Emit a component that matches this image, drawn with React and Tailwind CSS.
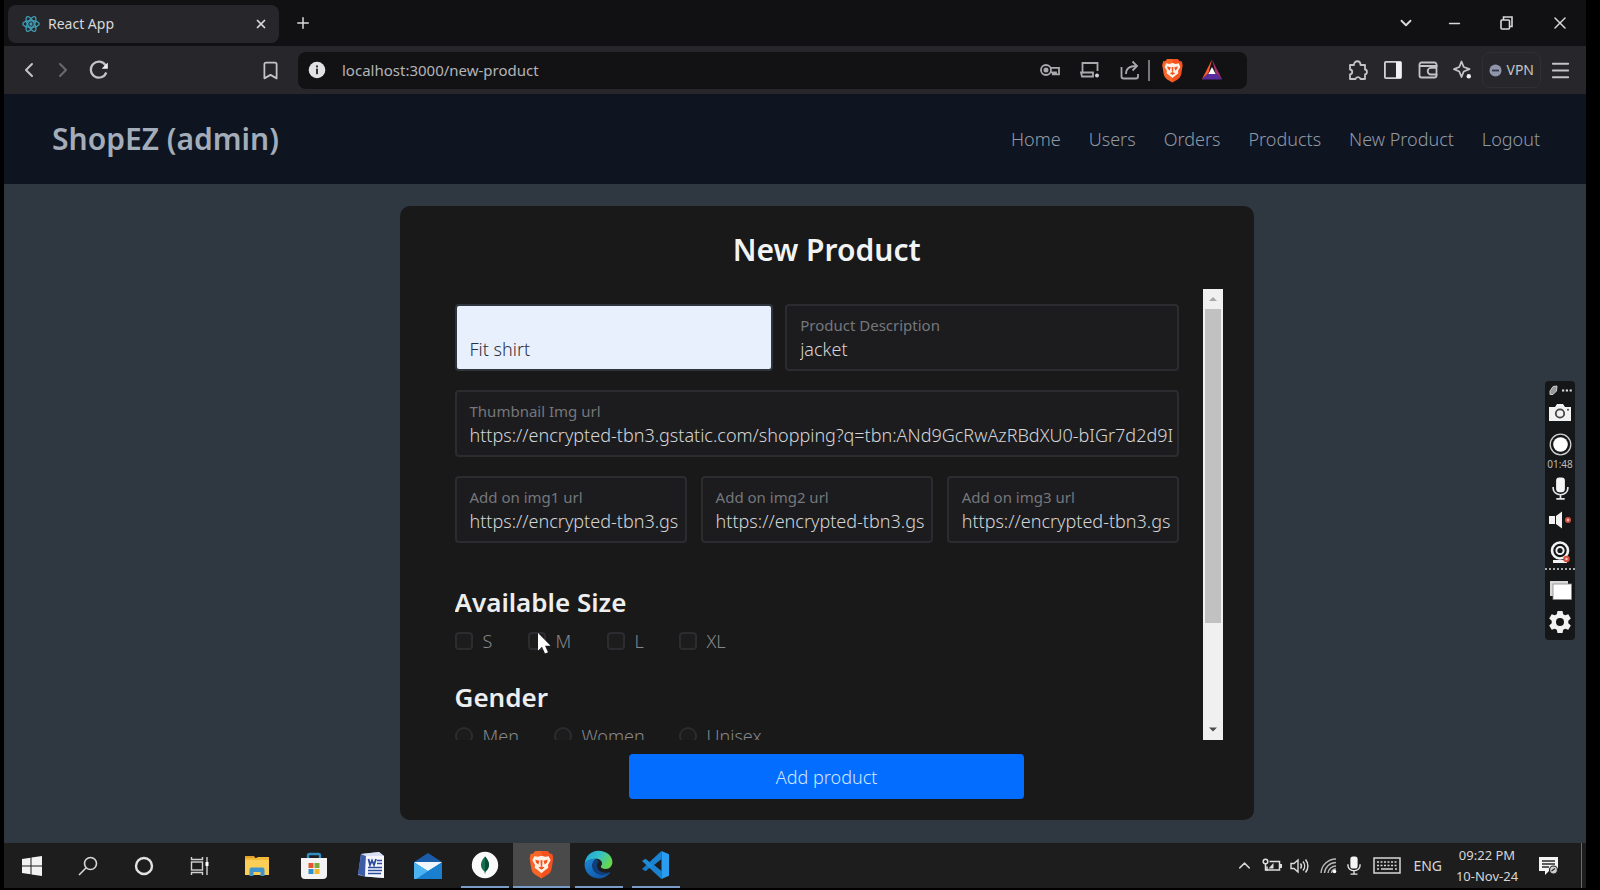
import { useState } from "react";
import {
  Bookmark,
  ChevronDown,
  ChevronLeft,
  ChevronRight,
  ChevronUp,
  Menu,
  Minus,
  Plus,
  X,
} from "lucide-react";

const URL_VALUE = "https://encrypted-tbn3.gs";
const THUMB_VALUE =
  "https://encrypted-tbn3.gstatic.com/shopping?q=tbn:ANd9GcRwAzRBdXU0-bIGr7d2d9I";

/* ---------- icons ---------- */

function ReactLogo() {
  return (
    <svg width="18" height="18" viewBox="-12 -12 24 24" fill="none" stroke="#3f9db5" strokeWidth="1.8">
      <circle r="2.2" fill="#3f9db5" stroke="none" />
      <ellipse rx="11" ry="4.3" />
      <ellipse rx="11" ry="4.3" transform="rotate(60)" />
      <ellipse rx="11" ry="4.3" transform="rotate(120)" />
    </svg>
  );
}

function ReloadIcon() {
  return (
    <svg width="22" height="22" viewBox="0 0 22 22" fill="none" stroke="#c4c4c8" strokeWidth="2.2">
      <path d="M18.3 13.5A8 8 0 1 1 17.6 6.4" />
      <path d="M19.8 3.6v6.2h-6.2z" fill="#f0f0f2" stroke="none" />
    </svg>
  );
}

function InfoIcon() {
  return (
    <svg width="18" height="18" viewBox="0 0 18 18">
      <circle cx="9" cy="9" r="8.3" fill="#e2e2e4" />
      <rect x="8" y="7.6" width="2" height="5.6" fill="#333" />
      <rect x="8" y="4.4" width="2" height="2" fill="#333" />
    </svg>
  );
}

function KeyIcon() {
  return (
    <svg width="20" height="14" viewBox="0 0 20 14" fill="none" stroke="#a9a9ad" strokeWidth="1.8">
      <circle cx="6" cy="7" r="5" />
      <circle cx="6" cy="7" r="1.6" fill="#a9a9ad" />
      <path d="M10.6 4.8H19v6.600h-3v-2h-1.600v2h-1.600v-2h-2" />
    </svg>
  );
}

function InstallIcon() {
  return (
    <svg width="20" height="18" viewBox="0 0 20 18" fill="none" stroke="#a9a9ad" strokeWidth="1.8">
      <path d="M17.500 10V2H2.500v10.500" />
      <path d="M1 11.500h12v4H2z" />
      <circle cx="17" cy="14.600" r="2" fill="#d0d0d4" stroke="none" />
    </svg>
  );
}

function ShareIcon() {
  return (
    <svg width="20" height="20" viewBox="0 0 20 20" fill="none" stroke="#a9a9ad" strokeWidth="1.8">
      <path d="M1.500 7v9.500a2 2 0 0 0 2 2H16a2 2 0 0 0 2-2V14" />
      <path d="M6 14c0-5 3-8 10.500-8" />
      <path d="m12.500 1.500 4.500 4.500-4.500 4.500" />
    </svg>
  );
}

function BraveLogo({ size }) {
  return (
    <svg width={size} height={size} viewBox="0 0 24 28">
      <path d="M6 1h12l2.200 2.500 2.200.2 1 4.300-1.600 10c-.6 3-2 4.500-4 6L12 27.500 6.200 24c-2-1.500-3.400-3-4-6L.6 8l1-4.300 2.200-.2z" fill="#f4511e" />
      <path d="M6 1h6v26.500L6.200 24c-2-1.500-3.400-3-4-6L.6 8l1-4.300 2.200-.2z" fill="#fb7a33" fillOpacity=".5" />
      <path d="m5 6 3.500.6L12 5.600l3.500 1L19 6l1.800 4-2.600 4.400.4 2.800-3.600 2.600L12 22.400l-3-2.600-3.600-2.600.4-2.800L3.200 10z" fill="#fff0e6" />
      <path d="m6 9.500 4 .8-1 3.700-2.200-1.800zM18 9.500l-4 .8 1 3.700 2.200-1.800zM11 10h2l-.3 5.500h-1.400zM9 17l3-1.200L15 17l-3 2z" fill="#f4511e" />
    </svg>
  );
}

function BatLogo() {
  return (
    <svg width="22" height="22" viewBox="0 0 22 22">
      <path d="M11 .5 7.500 14 .8 20.500z" fill="#ff5a2b" />
      <path d="M11 .5 21.200 20.500 14.500 14z" fill="#a3306f" />
      <path d="M.8 20.500h20.400L14.500 14h-7z" fill="#5a2d9c" />
      <path d="m11 8 3.600 7H7.400z" fill="#fff" />
    </svg>
  );
}

function PuzzleIcon() {
  return (
    <svg width="21" height="21" viewBox="0 0 21 21" fill="none" stroke="#c4c4c8" strokeWidth="1.8" strokeLinejoin="round">
      <path d="M3 5h4c0-5 6.500-5 6.500 0H18v4.500c2.600.4 2.600 4.600 0 5V19h-4.500c-.6-2.600-4.400-2.600-5 0H3v-4.500c3-.6 3-4.600 0-5z" />
    </svg>
  );
}

function SidebarIcon() {
  return (
    <svg width="20" height="20" viewBox="0 0 20 20">
      <rect x="1.900" y="1.900" width="16.200" height="16.200" rx="1" fill="none" stroke="#d2d2d6" strokeWidth="1.800" />
      <rect x="13" y="2" width="5" height="16" fill="#f2f2f4" />
    </svg>
  );
}

function WalletIcon() {
  return (
    <svg width="20" height="18" viewBox="0 0 20 18" fill="none" stroke="#c4c4c8" strokeWidth="1.800">
      <path d="M18.500 6V3.500a2 2 0 0 0-2-2h-13a2 2 0 0 0-2 2v11a2 2 0 0 0 2 2h13a2 2 0 0 0 2-2V13" />
      <path d="M2 5h16.500v8.500H13a3.300 3.300 0 0 1 0-6.600h5" />
    </svg>
  );
}

function SparkleIcon() {
  return (
    <svg width="19" height="20" viewBox="0 0 19 20" fill="none" stroke="#c4c4c8" strokeWidth="1.800" strokeLinejoin="round">
      <path d="M8.500 1.500 10.700 7l5.800 2.200-5.800 2.300-2.200 5.500-2.200-5.500L1 9.200 6.300 7z" />
      <circle cx="15.800" cy="16.300" r="2.200" fill="#f0f0f2" stroke="none" />
    </svg>
  );
}

function RestoreIcon() {
  return (
    <svg width="13" height="14" viewBox="0 0 13 14" fill="none" stroke="#d8d8da" strokeWidth="1.600">
      <rect x="1" y="4" width="8.500" height="9" rx="1" />
      <path d="M3.500 4V1H12v9.500H9.500" />
    </svg>
  );
}

function WindowsLogo() {
  return (
    <svg width="20" height="20" viewBox="0 0 20 20" fill="#f2f2f2">
      <path d="M0 3 8.500 1.800v7.700H0zM9.500 1.600 20 0v9.500H9.500zM0 10.500h8.500v7.700L0 17zM9.500 10.500H20V20L9.500 18.400z" />
    </svg>
  );
}

function SearchGlyph() {
  return (
    <svg width="20" height="20" viewBox="0 0 20 20" fill="none" stroke="#d6d6d6" strokeWidth="1.600">
      <circle cx="12.500" cy="7.500" r="6" />
      <path d="M8.200 11.800 1 19" />
    </svg>
  );
}

function CortanaGlyph() {
  return (
    <svg width="20" height="20" viewBox="0 0 20 20" fill="none" stroke="#e2e2e2" strokeWidth="2.400">
      <circle cx="10" cy="10" r="8" />
    </svg>
  );
}

function TaskViewGlyph() {
  return (
    <svg width="20" height="18" viewBox="0 0 20 18" fill="none" stroke="#d2d2d2" strokeWidth="1.400">
      <rect x="1.500" y="5" width="11" height="8" />
      <path d="M1.500 0v2.500h11V0M1.500 18v-2.500h11V18M17 0v18" />
      <rect x="15.500" y="5" width="3" height="4" fill="#fff" stroke="none" />
    </svg>
  );
}

function ExplorerLogo() {
  return (
    <svg width="26" height="22" viewBox="0 0 26 22">
      <path d="M1 1h9l2 3H1z" fill="#e0a126" />
      <path d="M1 3h24v17H1z" fill="#fbcf57" />
      <path d="M1 3h11l2-1h11v3H1z" fill="#f2b93a" />
      <path d="M5.500 21v-6.500a2 2 0 0 1 2-2h11a2 2 0 0 1 2 2V21h-4v-4h-7v4z" fill="#3f94cc" />
    </svg>
  );
}

function StoreLogo() {
  return (
    <svg width="28" height="28" viewBox="0 0 28 28">
      <path d="M8 7V3.500a1.500 1.500 0 0 1 1.500-1.500h9A1.500 1.500 0 0 1 20 3.500V7" fill="none" stroke="#2f8ec4" strokeWidth="2.400" />
      <path d="M1 6h26v17a4 4 0 0 1-4 4H5a4 4 0 0 1-4-4z" fill="#f3f3f3" />
      <rect x="8.500" y="11" width="5" height="5" fill="#e2562f" />
      <rect x="14.500" y="11" width="5" height="5" fill="#7fa83a" />
      <rect x="8.500" y="17" width="5" height="5" fill="#2d8fd0" />
      <rect x="14.500" y="17" width="5" height="5" fill="#f0b62c" />
    </svg>
  );
}

function WriterLogo() {
  return (
    <svg width="28" height="27" viewBox="0 0 28 27">
      <path d="M4 2 22 0l5 4v22l-19-1.500L1 23z" fill="#9fb3dc" />
      <path d="M4 2 9 4 8 24.500 1 22z" fill="#3c5ca8" />
      <path d="M9 4h18v22L8 24.500z" fill="#f5f7fc" />
      <path d="M4 2 22 0l5 4H9z" fill="#d9e0f1" />
      <path d="m11.500 7 1.500 6 2-4.500 2 4.500 2-6" fill="none" stroke="#2c4b9b" strokeWidth="1.800" />
      <path d="M20 8.500h5M20 11.500h5M11 15.500h14M11 18.500h14M11 21.500h13" stroke="#2c4b9b" strokeWidth="1.500" />
    </svg>
  );
}

function MailLogo() {
  return (
    <svg width="30" height="28" viewBox="0 0 30 28">
      <path d="M1 10 15 1l14 9v4H1z" fill="#1a5ca8" />
      <path d="M1 10h28L15 20z" fill="#eef5fb" />
      <path d="M1 10.500 15 19l14-8.500V27H1z" fill="#2f9fe6" />
      <path d="M29 10.500V27H3l12-8z" fill="#1b7fd0" />
      <path d="M1 10.500 15 19 3 27H1z" fill="#4bb4f0" />
    </svg>
  );
}

function MongoLogo() {
  return (
    <svg width="28" height="28" viewBox="0 0 28 28">
      <circle cx="14" cy="14" r="13.200" fill="#fafafa" />
      <path d="M14 5.500c5 5.500 5.500 11 .4 15.200V22.500h-.8v-1.800C8.500 16.500 9 11 14 5.500z" fill="#15704f" />
      <path d="M14 5.500c5 5.500 5.500 11 .4 15.200L14 21z" fill="#0b4a38" />
    </svg>
  );
}

function EdgeLogo() {
  return (
    <svg width="29" height="29" viewBox="0 0 29 29">
      <defs>
        <linearGradient id="edgeTop" x1="0" y1="0" x2="1" y2=".4">
          <stop offset="0" stopColor="#1f9fe0" />
          <stop offset=".55" stopColor="#35c1c6" />
          <stop offset="1" stopColor="#66d651" />
        </linearGradient>
        <linearGradient id="edgeLow" x1="0" y1="0" x2=".6" y2="1">
          <stop offset="0" stopColor="#1b8bdc" />
          <stop offset="1" stopColor="#1257a8" />
        </linearGradient>
      </defs>
      <path d="M.6 14.500C1 6.500 7 .8 14.500.8 22.500.8 28.400 6 28.400 12c0 4.200-3 7-6.600 7-3 0-5-1-5-2.200 0-.8 1.200-1.300 1.200-3.300 0-2.600-2.500-4.700-6-4.700C6.500 8.800 2 11 .6 14.500z" fill="url(#edgeTop)" />
      <path d="M.6 14.500C2 11 6.500 8.800 12 8.800c-3 2-4 5-3.500 8.200.6 5 5.500 8 10.500 7.500 3.300-.3 5.500-1.500 7.400-2.600C24 26 19.500 28.400 14.500 28.400 6.500 28.400.4 22 .6 14.500z" fill="url(#edgeLow)" />
      <path d="M12 8.800c-3 2-4 5-3.500 8.200.6 5 5.500 8 10.500 7.500 3.300-.3 5.500-1.500 7.400-2.600-5.400 2-12.400.4-13.400-5.400-.3-2.200.5-3.600 1.800-4.700z" fill="#0f3f7e" />
    </svg>
  );
}

function CodeLogo() {
  return (
    <svg width="29" height="28" viewBox="0 0 29 28">
      <path d="M20.500 0 28 3.300v21.400L20.500 28z" fill="#2a9df0" />
      <path d="M20.500 0v7.500L4.500 20.300 1 18z" fill="#1478c4" />
      <path d="M20.500 28v-7.500L4.500 7.700 1 10z" fill="#1f8ad8" />
      <path d="M20.500 0 9 11l4 3 7.500-6zM20.500 28 9 17l4-3 7.500 6z" fill="#1b82cf" />
    </svg>
  );
}

function BatteryGlyph() {
  return (
    <svg width="20" height="15" viewBox="0 0 20 15" fill="none" stroke="#dedede" strokeWidth="1.500">
      <path d="M7.500 3.500h10v8.500H5V8.500" />
      <path d="M19 6v4" strokeWidth="2" />
      <path d="M11.500 5v5.500H6.500z" fill="#dedede" stroke="none" />
      <circle cx="3.500" cy="3.500" r="2.300" />
      <path d="M3.500 6v6H6" />
    </svg>
  );
}

function SpeakerGlyph() {
  return (
    <svg width="20" height="16" viewBox="0 0 20 16" fill="none" stroke="#dedede" strokeWidth="1.400">
      <path d="M1 5.500h3L8 2v12l-4-3.500H1z" />
      <path d="M10.500 5.500a4 4 0 0 1 0 5M13 3.500a7 7 0 0 1 0 9M15.500 1.500a10 10 0 0 1 0 13" />
    </svg>
  );
}

function WifiGlyph() {
  return (
    <svg width="17" height="17" viewBox="0 0 17 17" fill="none" stroke="#b8b8b8" strokeWidth="1.400">
      <path d="M1 16A15 15 0 0 1 16 2M4.500 16A11.500 11.500 0 0 1 16 5.500M8 16a8 8 0 0 1 8-7M11.500 16a4.500 4.500 0 0 1 4.500-4" />
      <circle cx="14.500" cy="14.500" r="1.800" fill="#fff" stroke="none" />
    </svg>
  );
}

function MicGlyph({ width, height }) {
  return (
    <svg width={width} height={height} viewBox="0 0 16 22" fill="none" stroke="#e4e4e4" strokeWidth="1.600">
      <rect x="3.800" y=".5" width="8.400" height="14" rx="3" fill="#f4f4f4" stroke="none" />
      <path d="M1 9.500v1.500a7 6 0 0 0 14 0V9.500M8 17v4M4 21h8" />
    </svg>
  );
}

function KeyboardGlyph() {
  return (
    <svg width="28" height="17" viewBox="0 0 28 17" fill="none" stroke="#d6d6d6" strokeWidth="1.500">
      <rect x="1" y="1" width="26" height="15" />
      <path d="M4 5h20M4 8.500h20" strokeDasharray="2 1.500" />
      <path d="M4 12h2M8 12h12M22 12h2" />
    </svg>
  );
}

function NotificationGlyph() {
  return (
    <svg width="21" height="20" viewBox="0 0 21 20">
      <path d="M1 1h19v14h-9l-4 4v-4H1z" fill="#f4f4f4" />
      <path d="M4 5h13M4 8h13M4 11h7" stroke="#2a2a2a" strokeWidth="1.300" />
      <circle cx="15.500" cy="14" r="4" fill="#cfcfcf" stroke="#222" strokeWidth="1.200" />
      <path d="m13.500 15 3.500-2.500" stroke="#222" strokeWidth="1.200" />
    </svg>
  );
}

/* ---------- browser frame ---------- */

function IconButton({ label, className = "", children }) {
  return (
    <button type="button" aria-label={label} className={`flex items-center justify-center ${className}`}>
      {children}
    </button>
  );
}

function TabStrip() {
  return (
    <div className="flex h-[46px] items-center bg-[#111113] pl-1 text-[#d8d8da]">
      <div className="mt-0.5 flex h-[38px] w-[271px] items-center rounded-lg bg-[#27272b] pr-2.5 pl-3.5">
        <ReactLogo />
        <span className="ml-2 flex-1 text-sm leading-5">React App</span>
        <IconButton label="Close tab" className="size-4">
          <X size={14} strokeWidth={3} />
        </IconButton>
      </div>
      <IconButton label="New tab" className="ml-3.5 size-5">
        <Plus size={18} strokeWidth={2} />
      </IconButton>
      <div className="ml-auto flex items-center pr-2.5">
        <IconButton label="Search tabs" className="w-12">
          <ChevronDown size={18} strokeWidth={2.5} />
        </IconButton>
        <IconButton label="Minimize" className="w-12">
          <Minus size={17} strokeWidth={2} />
        </IconButton>
        <IconButton label="Restore" className="w-14">
          <RestoreIcon />
        </IconButton>
        <IconButton label="Close" className="ml-2.5 w-8">
          <X size={20} strokeWidth={1.8} />
        </IconButton>
      </div>
    </div>
  );
}

function Toolbar() {
  return (
    <div className="flex h-12 items-center bg-[#27272b] pr-3.5 text-[#c4c4c8]">
      <IconButton label="Back" className="ml-[7px] w-9">
        <ChevronLeft size={24} strokeWidth={2} />
      </IconButton>
      <IconButton label="Forward" className="w-8 text-[#6a6a6e]">
        <ChevronRight size={24} strokeWidth={2} />
      </IconButton>
      <IconButton label="Reload" className="ml-1 w-8">
        <ReloadIcon />
      </IconButton>
      <IconButton label="Bookmark this page" className="ml-[139px] w-8">
        <Bookmark size={21} strokeWidth={2} />
      </IconButton>
      <div className="mr-[100px] ml-3 flex h-[37px] min-w-0 flex-1 items-center rounded-lg bg-[#121214] pr-6 pl-2.5">
        <InfoIcon />
        <input
          aria-label="Address"
          defaultValue="localhost:3000/new-product"
          className="ml-4 min-w-0 flex-1 bg-transparent text-[15px] leading-5 text-[#b4b4b8] outline-none"
        />
        <IconButton label="Passwords" className="mr-5"><KeyIcon /></IconButton>
        <IconButton label="Install app" className="mr-5"><InstallIcon /></IconButton>
        <IconButton label="Share" className="mr-2"><ShareIcon /></IconButton>
        <span className="mr-2.5 h-[21px] w-0.5 bg-[#77777b]" />
        <IconButton label="Brave Shields" className="mr-4"><BraveLogo size={25} /></IconButton>
        <IconButton label="Brave Rewards"><BatLogo /></IconButton>
      </div>
      <div className="flex items-center">
        <IconButton label="Extensions" className="mr-[15px]"><PuzzleIcon /></IconButton>
        <IconButton label="Sidebar" className="mr-[15px]"><SidebarIcon /></IconButton>
        <IconButton label="Wallet" className="mr-[15px]"><WalletIcon /></IconButton>
        <IconButton label="Leo AI" className="mr-2.5"><SparkleIcon /></IconButton>
        <button type="button" className="mr-2 flex h-9 items-center gap-1 rounded-lg border border-[#303034] px-1.5 text-sm text-[#c4c4c8]">
          <svg width="13" height="13" viewBox="0 0 13 13">
            <circle cx="6.500" cy="6.500" r="6" fill="#9095ab" />
            <path d="M3 6.500h7" stroke="#34384a" strokeWidth="1.800" />
          </svg>
          VPN
        </button>
        <IconButton label="Menu"><Menu size={23} strokeWidth={2} /></IconButton>
      </div>
    </div>
  );
}

/* ---------- page ---------- */

const LINKS = ["Home", "Users", "Orders", "Products", "New Product", "Logout"];

function Navbar() {
  return (
    <header className="flex h-[90px] items-center justify-between bg-[#0e1420] pr-[46px] pl-12 text-[#a3acb9]">
      <h1 className="text-3xl font-semibold">ShopEZ (admin)</h1>
      <nav className="flex gap-7 text-lg font-light text-[#9299a5]">
        {LINKS.map((name) => (
          <a key={name} href="#">{name}</a>
        ))}
      </nav>
    </header>
  );
}

function Field({ id, label, value, className = "", filled }) {
  return (
    <div
      className={`flex h-[67px] min-w-0 flex-col justify-center rounded-sm border-2 pr-1 pb-0.5 pl-[13px] ${
        filled ? "border-[#30343c] bg-[#e8f0fe]" : "border-[#2b2c2f] bg-[#1c1c1f]"
      } ${className}`}
    >
      <label htmlFor={id} className={`text-[15px] leading-6 ${filled ? "text-[#e8f0fe]" : "text-[#75777b]"}`}>
        {label}
      </label>
      <input
        id={id}
        defaultValue={value}
        className={`w-full min-w-0 bg-transparent text-lg leading-6 font-light outline-none ${
          filled ? "text-[#2b3040]" : "text-[#d3d5d8]"
        }`}
      />
    </div>
  );
}

function Choice({ type, name, label, className = "" }) {
  return (
    <label className={`flex items-center gap-2.5 text-lg leading-6 font-light text-[#85878b] ${className}`}>
      <input
        type={type}
        name={name}
        className={`size-[18px] appearance-none border-2 border-[#2b2c2f] bg-[#1c1c1d] ${
          type === "radio" ? "rounded-full" : "rounded-sm"
        }`}
      />
      {label}
    </label>
  );
}

function ScrollBar() {
  return (
    <div aria-hidden="true" className="flex w-5 shrink-0 flex-col bg-[#f0f0f0]">
      <svg width="20" height="20" viewBox="0 0 20 20"><path d="m6 12 4-4 4 4z" fill="#a8a8a8" /></svg>
      <div className="mx-0.5 h-[314px] bg-[#c1c1c1]" />
      <svg className="mt-auto" width="20" height="20" viewBox="0 0 20 20"><path d="m6 7.500 4 4 4-4z" fill="#4c4c4c" /></svg>
    </div>
  );
}

function NewProductForm() {
  const [submitted, setSubmitted] = useState(false);
  return (
    <form
      data-submitted={submitted}
      onSubmit={(event) => {
        event.preventDefault();
        setSubmitted(true);
      }}
      className="ml-[25%] flex w-[54%] flex-col items-center rounded-[10px] bg-[#191919] pt-6 pb-[21px]"
    >
      <h2 className="text-3xl leading-10 font-semibold text-[#f1f3f5]">New Product</h2>
      <div className="mt-[19px] flex h-[451px] w-full pr-[31px] pl-[55px]">
        <div className="min-w-0 flex-1 overflow-hidden pt-[15px] pr-6">
          <div className="flex gap-3">
            <Field id="name" label="Product name" value="Fit shirt" className="w-[44%]" filled />
            <Field id="description" label="Product Description" value="jacket" className="flex-1" />
          </div>
          <Field id="thumbnail" label="Thumbnail Img url" value={THUMB_VALUE} className="mt-[19px]" />
          <div className="mt-[19px] grid grid-cols-3 gap-3.5">
            <Field id="img1" label="Add on img1 url" value={URL_VALUE} />
            <Field id="img2" label="Add on img2 url" value={URL_VALUE} />
            <Field id="img3" label="Add on img3 url" value={URL_VALUE} />
          </div>
          <fieldset className="mt-[39px]">
            <legend className="text-[26px] leading-10 font-semibold text-[#eceef0]">Available Size</legend>
            <div className="mt-[7px] flex">
              <Choice type="checkbox" name="size" label="S" className="w-[73px]" />
              <Choice type="checkbox" name="size" label="M" className="w-[79px]" />
              <Choice type="checkbox" name="size" label="L" className="w-[72px]" />
              <Choice type="checkbox" name="size" label="XL" />
            </div>
          </fieldset>
          <fieldset className="mt-6">
            <legend className="text-[26px] leading-10 font-semibold text-[#eceef0]">Gender</legend>
            <div className="mt-[7px] flex">
              <Choice type="radio" name="gender" label="Men" className="w-[99px]" />
              <Choice type="radio" name="gender" label="Women" className="w-[125px]" />
              <Choice type="radio" name="gender" label="Unisex" />
            </div>
          </fieldset>
        </div>
        <ScrollBar />
      </div>
      <button type="submit" className="mt-3.5 h-[45px] w-[395px] rounded-sm bg-[#036dff] text-lg font-light text-[#cfe6ff]">
        Add product
      </button>
    </form>
  );
}

function Pointer() {
  return (
    <svg className="absolute top-[632px] left-[537px]" width="14" height="23" viewBox="0 0 14 23">
      <path d="M1 1v17.500l4-3.700L8 21.500l3-1.300-3-6.500h5.500z" fill="#fff" />
    </svg>
  );
}

function Recorder() {
  return (
    <aside className="absolute top-[381px] right-[25px] flex h-[259px] w-[30px] flex-col items-center rounded-sm bg-[#151618]">
      <svg className="mt-1" width="26" height="11" viewBox="0 0 26 11">
        <path d="m3 6 3-4.500 4-.5-.5 5L6 9.500H3z" fill="#999" stroke="#ccc" />
        <path d="M15 5.500h10" stroke="#ddd" strokeWidth="2.200" strokeDasharray="2.200 1.600" />
      </svg>
      <IconButton label="Screenshot" className="mt-1.5 h-5">
        <svg width="24" height="19" viewBox="0 0 24 19">
          <path d="M1 4h6l2-3h6l2 3h6v14H1z" fill="#f2f2f2" />
          <circle cx="12" cy="10.500" r="4.200" fill="#f2f2f2" stroke="#444" strokeWidth="1.800" />
          <circle cx="20" cy="6.800" r="1" fill="#444" />
        </svg>
      </IconButton>
      <IconButton label="Stop recording" className="mt-2.5 h-6">
        <svg width="23" height="23" viewBox="0 0 23 23">
          <circle cx="11.500" cy="11.500" r="10.300" fill="none" stroke="#cfcfcf" strokeWidth="1.300" />
          <circle cx="11.500" cy="11.500" r="7.300" fill="#fff" />
        </svg>
      </IconButton>
      <span className="text-[10px] leading-4 text-[#bcbcbc]">01:48</span>
      <IconButton label="Microphone" className="mt-1 h-6"><MicGlyph width={17} height={23} /></IconButton>
      <IconButton label="System sound" className="mt-2.5 h-5">
        <svg width="24" height="18" viewBox="0 0 24 18">
          <path d="M1 5h6v8H1zM8 5l6-4.500v17L8 13z" fill="#f2f2f2" />
          <circle cx="20" cy="9" r="3" fill="#d9503f" />
          <circle cx="20" cy="9" r="1.200" fill="#f3c5bf" />
        </svg>
      </IconButton>
      <IconButton label="Webcam" className="mt-2.5 h-6">
        <svg width="22" height="23" viewBox="0 0 22 23">
          <circle cx="11" cy="9.500" r="8" fill="none" stroke="#f2f2f2" strokeWidth="2.600" />
          <circle cx="11" cy="9.500" r="3.600" fill="none" stroke="#f2f2f2" strokeWidth="2" />
          <path d="M4 20.500h14" stroke="#f2f2f2" strokeWidth="3" />
          <circle cx="17.500" cy="18" r="3.300" fill="#d9503f" />
          <circle cx="17.500" cy="18" r="1.200" fill="#f3c5bf" />
        </svg>
      </IconButton>
      <span className="mt-1 w-full border-t-2 border-dotted border-[#aaa]" />
      <IconButton label="Windows" className="mt-2.5 h-5">
        <svg width="23" height="20" viewBox="0 0 23 20">
          <path d="M1 1h18v3H4v12H1z" fill="#d8d8d8" />
          <rect x="4" y="4" width="18.500" height="15.500" fill="#fff" stroke="#888" strokeWidth=".8" />
        </svg>
      </IconButton>
      <IconButton label="Settings" className="mt-2.5 h-6">
        <svg width="24" height="24" viewBox="0 0 24 24" fill="#f2f2f2">
          <path fillRule="evenodd" d="M9.500 1h5l.7 3.200 2 1.100 3.100-1 2.500 4.300-2.500 2.200v2.400l2.500 2.200-2.500 4.300-3.100-1-2 1.100-.7 3.200h-5l-.7-3.200-2-1.100-3.100 1-2.500-4.300 2.500-2.200v-2.400L1.200 8.600l2.500-4.300 3.100 1 2-1.100zM12 8a4 4 0 1 0 0 8 4 4 0 0 0 0-8z" />
        </svg>
      </IconButton>
    </aside>
  );
}

/* ---------- taskbar ---------- */

const SYSTEM_BUTTONS = [
  { name: "Start", icon: <WindowsLogo /> },
  { name: "Search", icon: <SearchGlyph /> },
  { name: "Cortana", icon: <CortanaGlyph /> },
  { name: "Task View", icon: <TaskViewGlyph /> },
];

const APPS = [
  { name: "File Explorer", icon: <ExplorerLogo /> },
  { name: "Microsoft Store", icon: <StoreLogo /> },
  { name: "Writer", icon: <WriterLogo /> },
  { name: "Mail", icon: <MailLogo /> },
  { name: "MongoDB Compass", icon: <MongoLogo />, open: true },
  { name: "Brave", icon: <BraveLogo size={29} />, open: true, active: true },
  { name: "Microsoft Edge", icon: <EdgeLogo />, open: true },
  { name: "Visual Studio Code", icon: <CodeLogo />, open: true },
];

function Taskbar() {
  return (
    <footer className="flex h-[45px] items-stretch bg-[#1d1d1d] text-[#d6d6d6]">
      {SYSTEM_BUTTONS.map((item) => (
        <IconButton key={item.name} label={item.name} className="w-14">{item.icon}</IconButton>
      ))}
      {APPS.map((item) => (
        <button
          key={item.name}
          type="button"
          aria-label={item.name}
          className={`flex w-[57px] flex-col items-center ${item.active ? "bg-[#4a4a4a]" : ""}`}
        >
          <span className="flex flex-1 items-center">{item.icon}</span>
          {item.open && <span className={`h-0.5 bg-[#7a9cc8] ${item.active ? "w-full" : "w-12"}`} />}
        </button>
      ))}
      <div className="ml-auto flex items-center">
        <IconButton label="Show hidden icons" className="mr-2"><ChevronUp size={19} strokeWidth={1.8} /></IconButton>
        <span className="mr-2"><BatteryGlyph /></span>
        <span className="mr-2.5"><SpeakerGlyph /></span>
        <span className="mr-2.5"><WifiGlyph /></span>
        <span className="mr-3"><MicGlyph width={14} height={19} /></span>
        <span className="mr-3"><KeyboardGlyph /></span>
        <span className="text-sm">ENG</span>
        <div className="ml-3 w-[66px] text-center text-[13px] leading-[21px] whitespace-nowrap">
          <p>09:22 PM</p>
          <p>10-Nov-24</p>
        </div>
        <IconButton label="Notifications" className="ml-[18px]"><NotificationGlyph /></IconButton>
        <span className="mr-1 ml-[22px] h-[45px] w-px bg-[#6a6a6a]" />
      </div>
    </footer>
  );
}

export default function App() {
  return (
    <div className="relative min-h-screen bg-black pr-[14px] pb-0.5 pl-1 font-['Noto_Sans','Open_Sans',sans-serif]">
      <TabStrip />
      <Toolbar />
      <Navbar />
      <main className="bg-[#2f3740] pt-[22px] pb-[23px]">
        <NewProductForm />
      </main>
      <Taskbar />
      <Recorder />
      <Pointer />
    </div>
  );
}
